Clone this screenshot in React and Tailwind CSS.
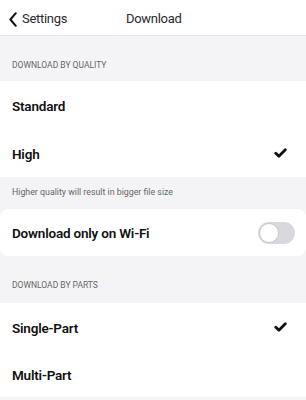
import React from "react";

function Check() {
  return (
    <svg width="13" height="10" viewBox="0 0 13 10" className="shrink-0">
      <path d="M1.8 5.2 L4.9 8.2 L11.3 1.8" fill="none" stroke="#111" strokeWidth="2.8" strokeLinecap="round" strokeLinejoin="round" />
    </svg>
  );
}

function Row({ label, checked, h = "h-[48px]" }) {
  return (
    <div className={`flex items-center justify-between pl-[12px] pr-[19px] ${h}`}>
      <span className="text-[13.5px] font-semibold text-[#111] tracking-[-0.2px] pt-[3px]">{label}</span>
      {checked && <Check />}
    </div>
  );
}

export default function App() {
  return (
    <div className="w-[306px] h-[400px] overflow-hidden bg-[#f4f4f6]" style={{ fontFamily: "Roboto, 'Noto Sans', sans-serif" }}>
      <div className="relative h-[36px] bg-white border-b border-[#e4e4e6] flex items-center pt-[3px]">
        <div className="flex items-center pl-[9px]">
          <svg width="8" height="15" viewBox="0 0 8 15">
            <path d="M6.8 1.2 L1.4 7.5 L6.8 13.8" fill="none" stroke="#111" strokeWidth="2" strokeLinecap="round" strokeLinejoin="round" />
          </svg>
          <span className="ml-[5px] text-[13px] tracking-[-0.3px] text-[#2a2a2a]">Settings</span>
        </div>
        <span className="absolute left-[126px] text-[13px] tracking-[-0.3px] text-[#2a2a2a]">Download</span>
      </div>
      <div className="h-[45px] flex items-end pb-[9px] pl-[12px]">
        <span className="text-[8.5px] text-[#666] uppercase">Download by quality</span>
      </div>
      <div className="bg-white">
        <Row label="Standard" />
        <Row label="High" checked />
      </div>
      <div className="h-[32px] flex items-center pl-[12px]">
        <span className="text-[8.8px] text-[#666]">Higher quality will result in bigger file size</span>
      </div>
      <div className="bg-white rounded-[8px] h-[47px] flex items-center justify-between pl-[12px] pr-[11px]">
        <span className="text-[13.5px] font-semibold text-[#111] tracking-[-0.2px] pt-[2px]">Download only on Wi-Fi</span>
        <div className="w-[37px] h-[22px] rounded-full bg-[#d9d9dd] p-[1px] flex items-center">
          <div className="w-[20px] h-[20px] rounded-full bg-white border border-[#c8c8cc]" />
        </div>
      </div>
      <div className="h-[47px] flex items-center pt-[12px] pl-[12px]">
        <span className="text-[8.5px] text-[#666] uppercase">Download by parts</span>
      </div>
      <div className="bg-white">
        <Row label="Single-Part" checked h="h-[47px]" />
        <Row label="Multi-Part" h="h-[47px]" />
      </div>
    </div>
  );
}
